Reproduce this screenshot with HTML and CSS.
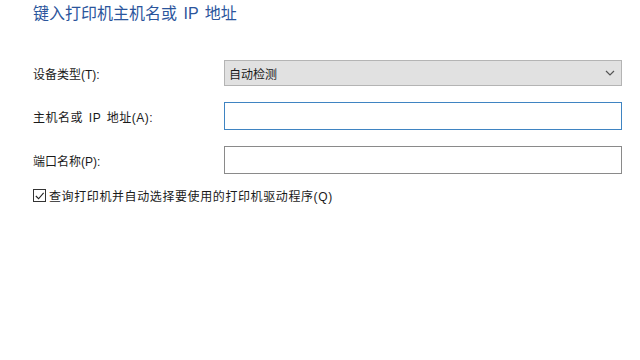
FILE: index.html
```html
<!DOCTYPE html>
<html lang="zh-CN">

<head>
    <meta charset="UTF-8">
    <meta name="viewport" content="width=device-width, initial-scale=1.0">
    <title>添加打印机</title>
    <link rel="stylesheet" href="styles.css">
</head>

<body>
    <div class="page">
        <h1 class="title">键入打印机主机名或 IP 地址</h1>

        <div class="form">
            <label class="label">设备类型(T):</label>
            <div class="select">
                <span>自动检测</span>
                <svg class="chevron" width="10" height="6" viewBox="0 0 10 6">
                    <path d="M1 1 L5 5 L9 1" fill="none" stroke="#555" stroke-width="1.2" />
                </svg>
            </div>

            <label class="label wide">主机名或 IP 地址(A):</label>
            <div class="input focus"></div>

            <label class="label">端口名称(P):</label>
            <div class="input"></div>
        </div>

        <div class="check-row">
            <span class="checkbox">
                <svg width="12" height="12" viewBox="0 0 12 12">
                    <path d="M2 6 L5 9 L10.5 2.5" fill="none" stroke="#222" stroke-width="1.2" />
                </svg>
            </span>
            <span class="check-text">查询打印机并自动选择要使用的打印机驱动程序(Q)</span>
        </div>
    </div>
</body>

</html>
```

FILE: styles.css
```css
body {
    margin: 0;
    background: #fff;
    font-family: "Liberation Sans", "Noto Sans CJK SC", sans-serif;
    color: #1a1a1a;
}

.page {
    width: 640px;
    height: 360px;
    padding-left: 33px;
    box-sizing: border-box;
}

.title {
    margin: 0;
    padding-top: 2px;
    font-size: 16px;
    line-height: 24px;
    font-weight: normal;
    color: #2b559c;
    word-spacing: 2px;
}

.form {
    display: grid;
    grid-template-columns: 191px 398px;
    row-gap: 16px;
    margin-top: 34px;
    align-items: center;
}

.label {
    font-size: 12px;
}

.label.wide {
    letter-spacing: 0.5px;
    word-spacing: 2px;
}

.select {
    height: 26px;
    box-sizing: border-box;
    border: 1px solid #b4b4b4;
    background: #e1e1e1;
    display: flex;
    align-items: center;
    justify-content: space-between;
    padding: 0 6px 0 4px;
    font-size: 12px;
}

.input {
    height: 28px;
    box-sizing: border-box;
    border: 1px solid #8a8a8a;
    background: #fff;
}

.input.focus {
    border-color: #3f84c2;
}

.check-row {
    display: flex;
    align-items: center;
    gap: 3px;
    margin-top: 13px;
    font-size: 12px;
}

.check-text {
    letter-spacing: 0.6px;
}

.checkbox {
    width: 13px;
    height: 13px;
    box-sizing: border-box;
    border: 1px solid #333;
    display: flex;
    align-items: center;
    justify-content: center;
}
```
